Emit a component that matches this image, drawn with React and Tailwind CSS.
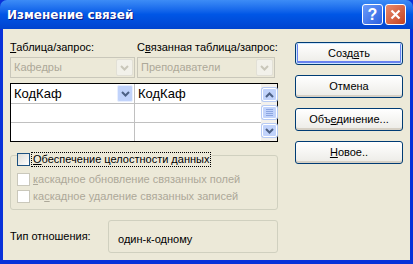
import React from "react";

const font = { fontFamily: '"Liberation Sans", Arial, sans-serif' };

function Chevron({ up = false, color = "#4d6185" }) {
  return (
    <svg width="9" height="6" viewBox="0 0 9 6">
      <path
        d={up ? "M1 5 L4.5 1.5 L8 5" : "M1 1 L4.5 4.5 L8 1"}
        fill="none"
        stroke={color}
        strokeWidth="2"
      />
    </svg>
  );
}

function ComboBox({ value, className }) {
  return (
    <div className={`h-[21px] border border-[#c9c7ba] bg-[#ece9d8] flex items-center ${className}`}>
      <span className="flex-1 pl-[3px] text-[#aca899]">{value}</span>
      <div className="w-[17px] h-[17px] mr-px rounded-[2px] border border-[#e2e0d6] bg-[#f2f1ea] flex items-center justify-center">
        <Chevron color="#c9c7ba" />
      </div>
    </div>
  );
}

function Button({ children, isDefault }) {
  return (
    <button
      className={`w-[108px] h-[23px] rounded-[3px] border border-[#003c74] bg-gradient-to-b from-white to-[#ecebe6] text-black flex items-center justify-center ${
        isDefault ? "shadow-[inset_0_0_0_1px_#cee7ff,inset_0_-1px_0_2px_#6982ee]" : "shadow-[inset_0_-2px_0_#d6d0c5]"
      }`}
    >
      {children}
    </button>
  );
}

function CheckBox({ accel, disabled, focused }) {
  const [a, b, c] = accel;
  return (
    <div className="flex items-center h-[17px]">
      <div
        className={`w-[13px] h-[13px] border ${
          disabled ? "border-[#cac8bb] bg-white" : "border-[#1c5180] bg-gradient-to-br from-[#dcdcd7] to-white"
        }`}
      />
      <span
        className={`ml-[2px] px-px leading-[13px] ${disabled ? "text-[#aca899]" : "text-black"} ${
          focused ? "outline outline-1 outline-dotted outline-black bg-[#ece9d8]" : ""
        }`}
      >
        {a}
        <u>{b}</u>
        {c}
      </span>
    </div>
  );
}

function ScrollBtn({ children }) {
  return (
    <div className="w-[15px] h-[13px] rounded-[2px] border border-white bg-[#c1d3fb] shadow-[0_0_0_1px_#b7cbf5] flex items-center justify-center">
      {children}
    </div>
  );
}

export default function App() {
  return (
    <div className="w-[413px] h-[264px] flex flex-col text-[11px] bg-[#0831d9] overflow-hidden" style={font}>
      <div className="h-[29px] shrink-0 rounded-t-[7px] bg-gradient-to-b from-[#3d8cf6] via-[#0056e6] to-[#0044cf] flex items-center pl-[7px] pr-[7px]">
        <span className="flex-1 text-white font-bold text-[12px] font-['DejaVu_Sans',sans-serif] [text-shadow:1px_1px_#0a1883]">
          Изменение связей
        </span>
        <div className="w-[21px] h-[21px] rounded-[3px] border border-white bg-gradient-to-br from-[#6b9bfa] to-[#2a5fe0] flex items-center justify-center text-white font-bold text-[16px]">
          ?
        </div>
        <div className="w-[21px] h-[21px] ml-[2px] rounded-[3px] border border-white bg-gradient-to-br from-[#e98a6c] to-[#c2401e] flex items-center justify-center">
          <svg width="11" height="11" viewBox="0 0 11 11">
            <path d="M1.5 1.5 L9.5 9.5 M9.5 1.5 L1.5 9.5" stroke="white" strokeWidth="2.2" />
          </svg>
        </div>
      </div>

      <div className="flex-1 mx-[3px] mb-[4px] bg-[#ece9d8] flex pl-[7px]">
        <div className="w-[268px] flex flex-col">
          <div className="flex mt-[10px] h-[15px]">
            <span className="w-[127px]">
              <u>Т</u>аблица/запрос:
            </span>
            <span>
              С<u>в</u>язанная таблица/запрос:
            </span>
          </div>
          <div className="flex gap-[2px] mt-[3px]">
            <ComboBox value="Кафедры" className="w-[125px]" />
            <ComboBox value="Преподаватели" className="w-[138px]" />
          </div>

          <div className="mt-[5px] h-[59px] border border-black bg-white flex">
            <div className="flex-1 flex flex-col">
              <div className="h-[20px] flex border-b border-[#c0c0c0]">
                <div className="w-[124px] flex items-center border-r border-[#c0c0c0]">
                  <span className="flex-1 pl-[3px] text-[13px]">КодКаф</span>
                  <div className="w-[16px] h-[17px] mr-px rounded-[2px] bg-[#c1d3fb] border border-[#e8efff] flex items-center justify-center">
                    <Chevron />
                  </div>
                </div>
                <span className="pl-[3px] text-[13px] flex items-center">КодКаф</span>
              </div>
              <div className="h-[19px] flex border-b border-[#c0c0c0]">
                <div className="w-[124px] border-r border-[#c0c0c0]" />
              </div>
              <div className="flex-1 flex">
                <div className="w-[124px] border-r border-[#c0c0c0]" />
              </div>
            </div>
            <div className="w-[16px] bg-[#f3f1ec] flex flex-col items-center justify-between py-[4px]">
              <ScrollBtn>
                <Chevron up />
              </ScrollBtn>
              <ScrollBtn>
                <div className="flex flex-col gap-[1px]">
                  <div className="w-[7px] h-px bg-[#8ca6e1]" />
                  <div className="w-[7px] h-px bg-[#8ca6e1]" />
                  <div className="w-[7px] h-px bg-[#8ca6e1]" />
                  <div className="w-[7px] h-px bg-[#8ca6e1]" />
                </div>
              </ScrollBtn>
              <ScrollBtn>
                <Chevron />
              </ScrollBtn>
            </div>
          </div>

          <div className="mt-[9px] relative">
            <div className="absolute left-0 right-0 top-[4px] h-[55px] border border-[#d0d0bf] rounded-[3px]" />
            <div className="relative pl-[7px] flex flex-col">
              <div className="w-fit bg-[#ece9d8] pr-[2px]">
                <CheckBox accel={["", "О", "беспечение целостности данных"]} focused />
              </div>
              <div className="mt-[3px]">
                <CheckBox accel={["", "к", "аскадное обновление связанных полей"]} disabled />
              </div>
              <CheckBox accel={["ка", "с", "кадное удаление связанных записей"]} disabled />
            </div>
          </div>

          <div className="mt-[15px] flex items-center">
            <span className="w-[98px]">Тип отношения:</span>
            <div className="w-[170px] h-[33px] border border-[#d0d0bf] rounded-[3px] flex items-start pt-[10px] pl-[9px]">
              один-к-одному
            </div>
          </div>
        </div>

        <div className="ml-[17px] pt-[13px] flex flex-col gap-[10px]">
          <Button isDefault>
            <span>
              Созд<u>а</u>ть
            </span>
          </Button>
          <Button>Отмена</Button>
          <Button>
            <span>
              Объ<u>е</u>динение...
            </span>
          </Button>
          <Button>
            <span>
              <u>Н</u>овое..
            </span>
          </Button>
        </div>
      </div>
    </div>
  );
}
